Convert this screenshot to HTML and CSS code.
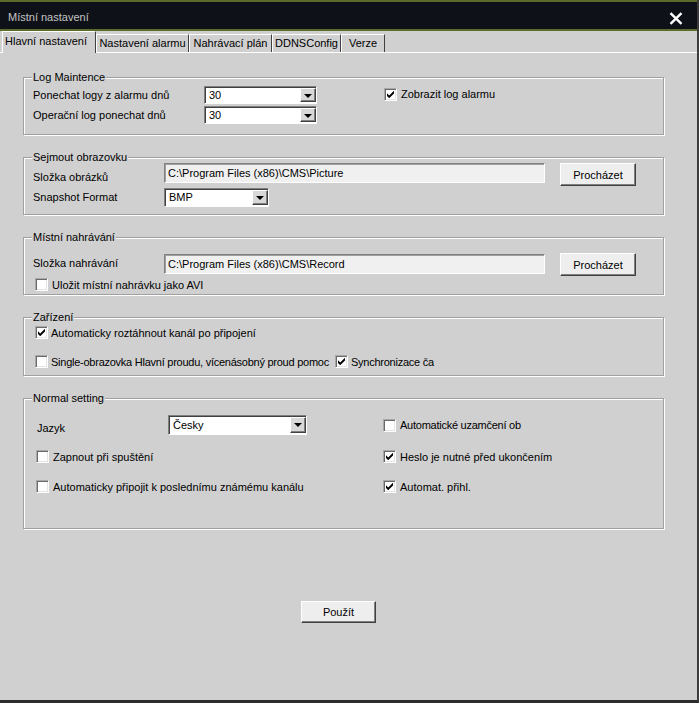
FILE: index.html
```html
<!DOCTYPE html>
<html lang="cs">
<head>
<meta charset="utf-8">
<title>Místní nastavení</title>
<link rel="stylesheet" href="styles.css">
</head>
<body>
<div class="window">
  <div class="titlebar">
    <span class="title">Místní nastavení</span>
    <svg class="close" viewBox="0 0 14 13" aria-hidden="true"><path d="M1.5 1.2 L12.5 11.8 M12.5 1.2 L1.5 11.8" stroke="#fff" stroke-width="2.4" fill="none"/></svg>
  </div>
  <div class="tabs">
    <div class="tab active t-main">Hlavní nastavení</div>
    <div class="tab t-alarm">Nastavení alarmu</div>
    <div class="tab t-plan">Nahrávací plán</div>
    <div class="tab t-ddns">DDNSConfig</div>
    <div class="tab t-ver">Verze</div>
  </div>
  <div class="panel">
    <div class="group g-log">
      <div class="legend">Log Maintence</div>
      <div class="log-grid">
        <span class="lbl">Ponechat logy z alarmu dnů</span>
        <div class="combo"><span class="val">30</span><span class="drop"></span></div>
        <div class="chk chk-log"><span class="box on"></span><span>Zobrazit log alarmu</span></div>
        <span class="lbl">Operační log ponechat dnů</span>
        <div class="combo"><span class="val">30</span><span class="drop"></span></div>
      </div>
    </div>

    <div class="group g-snap">
      <div class="legend">Sejmout obrazovku</div>
      <div class="path-grid">
        <span class="lbl lbl-low">Složka obrázků</span>
        <div class="textbox">C:\Program Files (x86)\CMS\Picture</div>
        <button class="btn btn-browse">Procházet</button>
        <span class="lbl">Snapshot Format</span>
        <div class="combo combo-fmt"><span class="val">BMP</span><span class="drop"></span></div>
      </div>
    </div>

    <div class="group g-rec">
      <div class="legend">Místní nahrávání</div>
      <div class="path-grid rec-grid">
        <span class="lbl">Složka nahrávání</span>
        <div class="textbox">C:\Program Files (x86)\CMS\Record</div>
        <button class="btn btn-browse">Procházet</button>
        <div class="chk chk-avi"><span class="box"></span><span>Uložit místní nahrávku jako AVI</span></div>
      </div>
    </div>

    <div class="group g-dev">
      <div class="legend">Zařízení</div>
      <div class="dev-body">
        <div class="chk"><span class="box on"></span><span>Automaticky roztáhnout kanál po připojení</span></div>
        <div class="dev-row">
          <div class="chk clip-single"><span class="box"></span><span class="tight">Single-obrazovka Hlavní proudu, vícenásobný proud pomoc</span></div>
          <div class="chk clip-sync"><span class="box on"></span><span class="tight">Synchronizace ča</span></div>
        </div>
      </div>
    </div>

    <div class="group g-norm">
      <div class="legend">Normal setting</div>
      <div class="norm-grid">
        <div class="lang">
          <span class="lbl lbl-jazyk">Jazyk</span>
          <div class="combo combo-lang"><span class="val">Česky</span><span class="drop"></span></div>
        </div>
        <div class="chk clip-lock"><span class="box"></span><span class="tight">Automatické uzamčení ob</span></div>
        <div class="chk"><span class="box"></span><span>Zapnout při spuštění</span></div>
        <div class="chk"><span class="box on"></span><span>Heslo je nutné před ukončením</span></div>
        <div class="chk"><span class="box"></span><span>Automaticky připojit k poslednímu známému kanálu</span></div>
        <div class="chk"><span class="box on"></span><span>Automat. přihl.</span></div>
      </div>
    </div>

    <div class="actions">
      <button class="btn btn-apply">Použít</button>
    </div>
  </div>
</div>
</body>
</html>
```

FILE: styles.css
```css
* { box-sizing: border-box; }
html, body { margin: 0; padding: 0; }
body {
  width: 699px;
  height: 703px;
  overflow: hidden;
  background: #d0d0d0;
  font-family: "Liberation Sans", Arial, sans-serif;
  font-size: 11px;
  color: #000;
}
.window {
  width: 699px;
  height: 703px;
  background: #d0d0d0;
  border-right: 2px solid #3c3c3c;
  border-bottom: 3px solid #2c2c2c;
  display: flex;
  flex-direction: column;
}
.titlebar {
  height: 31px;
  flex: none;
  background: #0e1118;
  border-top: 2px solid #5a6b2c;
  border-bottom: 2px solid #5a6b2c;
  display: flex;
  align-items: center;
  justify-content: space-between;
  padding: 0 14px 0 8px;
}
.title { color: #c4c4c4; font-size: 11px; margin-top: 2px; }
.close { width: 14px; height: 13px; margin-top: 5px; }

.tabs {
  flex: none;
  height: 22px;
  display: flex;
  align-items: flex-end;
  padding-left: 2px;
  border-bottom: 1px solid #fff;
}
.tab {
  height: 18px;
  line-height: 17px;
  padding: 0;
  text-align: center;
  border: 1px solid #fff;
  border-right-color: #404040;
  border-bottom: none;
  background: #d0d0d0;
  white-space: nowrap;
}
.tab.active {
  height: 22px;
  line-height: 19px;
  text-align: left;
  padding-left: 2px;
  margin-bottom: -1px;
}
.t-main { width: 94px; }
.t-alarm { width: 93px; }
.t-plan { width: 83px; }
.t-ddns { width: 69px; }
.t-ver { width: 44px; }

.panel {
  flex: 1;
  padding: 24px 0 0 23px;
}
.group {
  width: 641px;
  border: 1px solid #a0a0a0;
  box-shadow: inset 1px 1px 0 #fff, 1px 1px 0 #fff;
}
.group + .group { margin-top: 22px; }
.legend {
  width: fit-content;
  margin: -6px 0 0 8px;
  padding: 0 1px;
  background: #d0d0d0;
  line-height: 11px;
  white-space: nowrap;
}
.lbl { white-space: nowrap; }
.tight { letter-spacing: -0.25px; }

/* controls */
.combo {
  display: flex;
  align-items: stretch;
  height: 18px;
  background: #fff;
  border: 1px solid;
  border-color: #808080 #fff #fff #808080;
  box-shadow: inset 1px 1px 0 #404040;
}
.combo .val { flex: 1; padding: 2px 0 0 4px; line-height: 13px; }
.combo .drop {
  width: 16px;
  margin: 1px 0 1px 0;
  background: #d8d8d8;
  border: 1px solid;
  border-color: #fff #404040 #404040 #fff;
  box-shadow: inset -1px -1px 0 #808080;
  position: relative;
}
.combo .drop::after {
  content: "";
  position: absolute;
  left: 3px;
  top: 5px;
  border-left: 4px solid transparent;
  border-right: 4px solid transparent;
  border-top: 4px solid #000;
}
.textbox {
  height: 20px;
  background: #f0f0f0;
  border: 1px solid;
  border-color: #808080 #fff #fff #808080;
  box-shadow: inset 1px 1px 0 #a0a0a0;
  padding: 3px 0 0 3px;
  line-height: 13px;
  white-space: nowrap;
  overflow: hidden;
}
.btn {
  font: inherit;
  color: #000;
  height: 23px;
  padding: 0;
  background: #eeeeee;
  border: 1px solid;
  border-color: #fff #404040 #404040 #fff;
  box-shadow: inset -1px -1px 0 #808080;
}
.chk {
  display: flex;
  align-items: center;
  gap: 4px;
  height: 13px;
  white-space: nowrap;
  overflow: hidden;
}
.box {
  flex: none;
  width: 13px;
  height: 13px;
  background: #fff;
  border: 1px solid;
  border-color: #a8a8a8 #fff #fff #a8a8a8;
  box-shadow: inset 1px 1px 0 #6a6a6a, inset -1px -1px 0 #e4e4e4;
}
.box.on {
  background: #fff url("data:image/svg+xml,%3Csvg xmlns='http://www.w3.org/2000/svg' viewBox='0 0 7 7'%3E%3Cpath d='M0 2.2 L2.2 4.4 L7 -0.3 L7 2.6 L2.2 7.2 L0 5 Z' fill='%23000'/%3E%3C/svg%3E") no-repeat 2px 2px / 7px 7px;
}

/* group 1 */
.g-log { height: 58px; }
.log-grid {
  margin-top: 3px;
  padding-left: 9px;
  display: grid;
  grid-template-columns: 171px 113px auto;
  grid-template-rows: 18px 18px;
  row-gap: 2px;
  align-items: center;
}
.chk-log { margin-left: 67px; margin-top: -2px; }

/* group 2 + 3 */
.g-snap { height: 58px; }
.path-grid {
  padding-left: 9px;
  display: grid;
  grid-template-columns: 131px 381px 91px;
  grid-template-rows: 24px 20px;
  align-items: start;
}
.btn-browse { width: 76px; margin-left: 15px; }
.path-grid .lbl { align-self: center; }
.path-grid .lbl-low { align-self: start; padding-top: 8px; }
.combo-fmt { width: 105px; height: 19px; margin-top: 1px; }
.g-rec { height: 58px; }
.rec-grid {
  margin-top: 10px;
  grid-template-rows: 25px 13px;
}
.rec-grid .lbl { align-self: start; padding-top: 4px; }
.rec-grid .textbox { margin-top: 1px; }
.chk-avi { grid-column: 1 / 3; margin-left: 2px; }

/* group 4 */
.g-dev { height: 59px; }
.dev-body {
  margin-top: 3px;
  padding-left: 11px;
  display: flex;
  flex-direction: column;
  gap: 16px;
}
.dev-row { display: flex; }
.clip-single { width: 300px; gap: 3px; }
.clip-sync { width: 100px; gap: 3px; }
.dev-body > .chk { gap: 3px; }

/* group 5 */
.g-norm { height: 131px; }
.norm-grid {
  margin-top: 11px;
  padding-left: 12px;
  display: grid;
  grid-template-columns: 347px auto;
  grid-template-rows: 20px 28px 30px;
  align-items: end;
}
.lang { display: flex; align-items: center; height: 20px; }
.lbl-jazyk { width: 132px; padding: 6px 0 0 1px; }
.combo-lang { width: 139px; height: 20px; }
.combo-lang .val { padding-top: 3px; }
.clip-lock { width: 140px; align-self: center; }

.actions { margin: 72px 0 0 278px; }
.btn-apply { width: 75px; height: 22px; }
```
